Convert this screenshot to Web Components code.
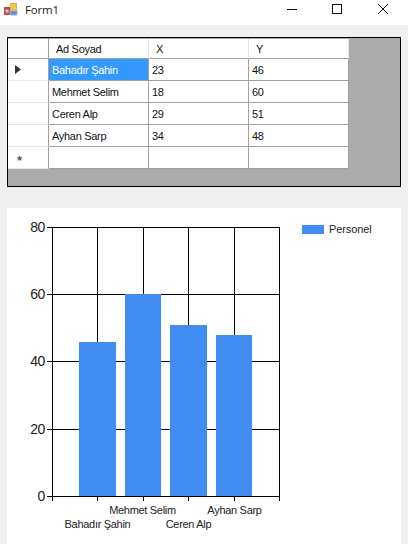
<!DOCTYPE html>
<html>
<head>
<meta charset="utf-8">
<title>Form1</title>
<style>
	html, body { margin: 0; padding: 0; background: #f0f0f0; }
	body { width: 408px; height: 544px; overflow: hidden; }
</style>
</head>
<body>
<form-window caption="Form1">
	<data-grid></data-grid>
	<bar-chart></bar-chart>
</form-window>

<script>
const PEOPLE = [
	['Bahadır Şahin', 23, 46],
	['Mehmet Selim', 18, 60],
	['Ceren Alp', 29, 51],
	['Ayhan Sarp', 34, 48]
];

// Window frame with title bar
class FormWindow extends HTMLElement {
	constructor() {
		super();
		this.attachShadow({ mode: 'open' });
	}

	connectedCallback() {
		this.shadowRoot.innerHTML = `
            <style>
                :host {
                    display: block;
                    width: 408px;
                    height: 544px;
                    background: #f0f0f0;
                }

                .titlebar {
                    height: 25px;
                    background: #ffffff;
                    display: flex;
                    align-items: center;
                    padding-left: 3px;
                    gap: 6px;
                    font-family: 'Open Sans', 'Liberation Sans', sans-serif;
                    font-size: 11.5px;
                    letter-spacing: -0.2px;
                    color: #222222;
                }

                .logo { width: 16px; height: 16px; flex-shrink: 0; margin-bottom: 5px; }

                .caption { flex: 1; margin-bottom: 7px; }

                .buttons { display: flex; align-self: flex-start; margin-right: 1px; }

                .buttons svg { width: 46px; height: 19px; display: block; }

                .content {
                    display: flex;
                    flex-direction: column;
                    gap: 21px;
                    padding: 12px 7px 0 7px;
                }
            </style>
            <div class="titlebar">
                <svg class="logo" viewBox="0 0 16 16">
                    <rect x="1" y="5" width="6" height="8" fill="#c8483c"/>
                    <rect x="2.5" y="7.5" width="3" height="3" fill="#eec0b4"/>
                    <rect x="7.5" y="1.5" width="6" height="7" fill="#f4c840" stroke="#c8b070" stroke-width="1"/>
                    <rect x="7" y="9" width="7" height="4" fill="#5c8ad8" stroke="#a0b4d8" stroke-width="1"/>
                </svg>
                <span class="caption">${this.getAttribute('caption')}</span>
                <div class="buttons">
                    <svg viewBox="0 0 46 19"><path d="M18 9.5H28" stroke="#111" fill="none"/></svg>
                    <svg viewBox="0 0 46 19"><rect x="17.5" y="4.5" width="9" height="9" stroke="#111" fill="none"/></svg>
                    <svg viewBox="0 0 46 19"><path d="M17 4L27 14M27 4L17 14" stroke="#111" fill="none"/></svg>
                </div>
            </div>
            <div class="content"><slot></slot></div>
        `;
	}
}

// DataGridView look-alike
class DataGrid extends HTMLElement {
	constructor() {
		super();
		this.attachShadow({ mode: 'open' });
	}

	connectedCallback() {
		const rows = PEOPLE.map((p, i) => `
            <div class="head arrow">${i === 0 ? '<svg width="6" height="9" viewBox="0 0 6 9"><path d="M0 0L6 4.5L0 9Z" fill="#333"/></svg>' : ''}</div>
            <div class="cell ${i === 0 ? 'sel' : ''}">${p[0]}</div>
            <div class="cell">${p[1]}</div>
            <div class="cell">${p[2]}</div>
        `).join('');

		this.shadowRoot.innerHTML = `
            <style>
                :host {
                    display: block;
                    box-sizing: border-box;
                    width: 394px;
                    height: 150px;
                    background: #ababab;
                    border: 1px solid #000000;
                    padding-top: 1px;
                    font-family: 'Liberation Sans', Arial, sans-serif;
                    font-size: 11px;
                    letter-spacing: -0.3px;
                    color: #111111;
                }

                .table {
                    display: grid;
                    grid-template-columns: 41px 100px 100px 100px;
                    grid-template-rows: 20px repeat(5, 22px);
                    width: 341px;
                }

                .table > div {
                    box-sizing: border-box;
                    display: flex;
                    align-items: center;
                    white-space: nowrap;
                    overflow: hidden;
                }

                .top {
                    background: #ffffff;
                    border-right: 1px solid #e4e4e4;
                    border-bottom: 1px solid #a0a0a0;
                    padding-left: 7px;
                    padding-top: 1px;
                }

                .head {
                    background: #ffffff;
                    border-right: 1px solid #a0a0a0;
                    border-bottom: 1px solid #e8e8e8;
                    justify-content: center;
                }

                .arrow { padding-right: 21px; }

                .cell {
                    background: #ffffff;
                    border-right: 1px solid #a0a0a0;
                    border-bottom: 1px solid #a0a0a0;
                    padding-left: 3px;
                    padding-top: 1px;
                }

                .sel { background: #3399ff; color: #ffffff; }

                .star {
                    font-size: 13px;
                    font-weight: bold;
                    color: #555555;
                    padding-right: 17px;
                    padding-top: 6px;
                }
            </style>
            <div class="table">
                <div class="top" style="border-right-color:#a0a0a0"></div>
                <div class="top">Ad Soyad</div>
                <div class="top">X</div>
                <div class="top">Y</div>
                ${rows}
                <div class="head star">*</div>
                <div class="cell"></div>
                <div class="cell"></div>
                <div class="cell"></div>
            </div>
        `;
	}
}

// Column chart, drawn on the same pixel grid as the reference
class BarChart extends HTMLElement {
	constructor() {
		super();
		this.attachShadow({ mode: 'open' });
	}

	connectedCallback() {
		const left = 45, right = 272, top = 19, bottom = 288;
		const xs = [45, 90, 136, 181, 227, 272];
		const ys = [[80, 19], [60, 86], [40, 153], [20, 221], [0, 288]];
		// x, width, top of each column
		const bars = [[72, 37, 134], [118, 36, 86], [163, 37, 117], [209, 36, 127]];

		const grid = [
			...xs.map(x => `<line x1="${x + .5}" y1="${top}" x2="${x + .5}" y2="${bottom + 5}"/>`),
			...ys.map(y => `<line x1="${left - 5}" y1="${y[1] + .5}" x2="${right}" y2="${y[1] + .5}"/>`)
		].join('');

		this.shadowRoot.innerHTML = `
            <style>
                :host { display: block; width: 394px; height: 336px; background: #ffffff; }
                svg { display: block; font-family: 'Liberation Sans', Arial, sans-serif; }
                .axis { font-size: 14px; letter-spacing: -0.4px; fill: #222222; }
                .label { font-size: 11px; letter-spacing: -0.3px; fill: #222222; }
                .legend { font-size: 11px; letter-spacing: -0.1px; fill: #222222; }
            </style>
            <svg width="394" height="336" viewBox="0 0 394 336">
                <g stroke="#000000" stroke-width="1" shape-rendering="crispEdges">${grid}</g>
                ${bars.map(b => `<rect x="${b[0]}" y="${b[2]}" width="${b[1]}" height="${bottom - b[2]}" fill="#418cf0"/>`).join('')}
                ${ys.map(y => `<text class="axis" x="38" y="${y[1] + 5}" text-anchor="end">${y[0]}</text>`).join('')}
                <text class="label" x="90.5" y="320" text-anchor="middle">Bahadır Şahin</text>
                <text class="label" x="135.5" y="306" text-anchor="middle">Mehmet Selim</text>
                <text class="label" x="181.5" y="320" text-anchor="middle">Ceren Alp</text>
                <text class="label" x="227.5" y="306" text-anchor="middle">Ayhan Sarp</text>
                <rect x="295" y="17" width="22" height="9" fill="#418cf0"/>
                <text class="legend" x="322" y="25">Personel</text>
            </svg>
        `;
	}
}

customElements.define('form-window', FormWindow);
customElements.define('data-grid', DataGrid);
customElements.define('bar-chart', BarChart);
</script>
</body>
</html>
